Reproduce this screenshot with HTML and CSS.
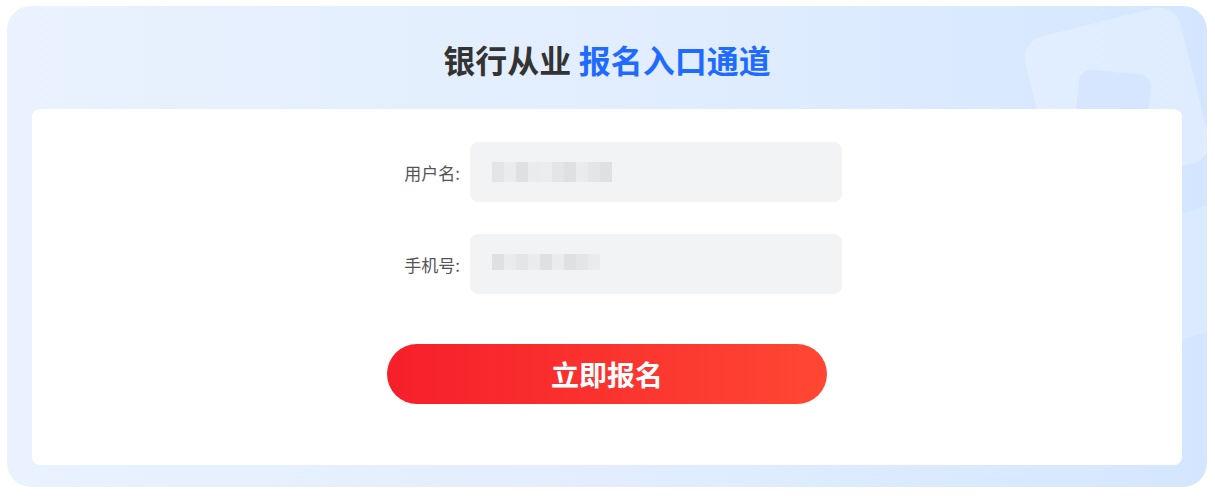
FILE: index.html
```html
<!DOCTYPE html>
<html lang="zh">
<head>
    <meta charset="UTF-8">
    <meta name="viewport" content="width=device-width, initial-scale=1.0">
    <title>银行从业 报名入口通道</title>
    <link rel="stylesheet" href="styles.css">
</head>
<body>
    <div class="panel">
        <div class="deco deco-big"></div>
        <div class="deco deco-small"></div>
        <div class="deco deco-stripe"></div>

        <h1 class="title">银行从业 <span class="title-blue">报名入口通道</span></h1>

        <div class="card">
            <div class="form-row">
                <label class="form-label">用户名:</label>
                <div class="form-input">
                    <span class="mosaic">
                        <i class="m1"></i><i class="m2"></i><i class="m3"></i><i class="m2"></i><i class="m4"></i><i class="m1"></i><i class="m3"></i><i class="m2"></i><i class="m1"></i><i class="m3"></i>
                    </span>
                </div>
            </div>

            <div class="form-row">
                <label class="form-label">手机号:</label>
                <div class="form-input">
                    <span class="mosaic mosaic-short">
                        <i class="m3"></i><i class="m2"></i><i class="m1"></i><i class="m2"></i><i class="m3"></i><i class="m2"></i><i class="m3"></i><i class="m1"></i><i class="m2"></i>
                    </span>
                </div>
            </div>

            <button class="submit">立即报名</button>
        </div>
    </div>
</body>
</html>
```

FILE: styles.css
```css
:root {
    --text: #333333;
    --label: #555555;
    --blue: #1f6bff;
    --input-bg: #f2f3f5;
}

body {
    margin: 0;
    padding: 6px 8px 9px 7px;
    background: #ffffff;
    font-family: "Noto Sans CJK SC", "Noto Sans", sans-serif;
}

.panel {
    position: relative;
    overflow: hidden;
    height: 481px;
    box-sizing: border-box;
    padding: 31px 25px 22px 25px;
    border-radius: 24px;
    background: linear-gradient(90deg, #e9f2fe 0%, #e2eefe 50%, #d4e6ff 100%);
    display: flex;
    flex-direction: column;
}

.deco {
    position: absolute;
    border-radius: 22px;
}

.deco-big {
    width: 160px;
    height: 160px;
    left: 1030px;
    top: 14px;
    background: rgba(255, 255, 255, 0.25);
    transform: rotate(-14deg);
}

.deco-small {
    width: 72px;
    height: 60px;
    left: 1070px;
    top: 66px;
    border-radius: 12px 12px 30px 12px;
    background: rgba(205, 225, 254, 0.6);
    transform: rotate(6deg);
}

.deco-stripe {
    width: 240px;
    height: 120px;
    left: 1100px;
    top: 196px;
    background: rgba(255, 255, 255, 0.18);
    transform: rotate(-18deg);
    border-radius: 0;
}

.title {
    position: relative;
    margin: 0 0 28px 0;
    text-align: center;
    font-size: 32px;
    line-height: 44px;
    font-weight: 700;
    color: var(--text);
}

.title-blue {
    color: var(--blue);
}

.card {
    position: relative;
    flex: 1;
    background: #ffffff;
    border-radius: 8px;
    padding: 33px 0 0 0;
    display: flex;
    flex-direction: column;
    align-items: center;
}

.form-row {
    display: flex;
    align-items: center;
    gap: 10px;
    margin-left: 8px;
    margin-bottom: 32px;
}

.form-label {
    width: 80px;
    text-align: right;
    font-size: 17px;
    color: var(--label);
}

.form-input {
    width: 372px;
    height: 60px;
    box-sizing: border-box;
    padding: 0 22px;
    border-radius: 8px;
    background: var(--input-bg);
    display: flex;
    align-items: center;
}

.mosaic {
    display: flex;
    height: 20px;
}

.mosaic i {
    display: block;
    width: 12px;
    height: 20px;
}

.mosaic-short i {
    height: 16px;
}

.m1 { background: #e4e5e7; }
.m2 { background: #eaebed; }
.m3 { background: #dfe0e2; }
.m4 { background: #ecedef; }

.submit {
    margin-top: 18px;
    width: 440px;
    height: 60px;
    border: none;
    border-radius: 30px;
    background: linear-gradient(90deg, #f61f2a 0%, #ff4733 100%);
    color: #ffffff;
    font-family: inherit;
    font-size: 28px;
    font-weight: 700;
    cursor: pointer;
}
```
